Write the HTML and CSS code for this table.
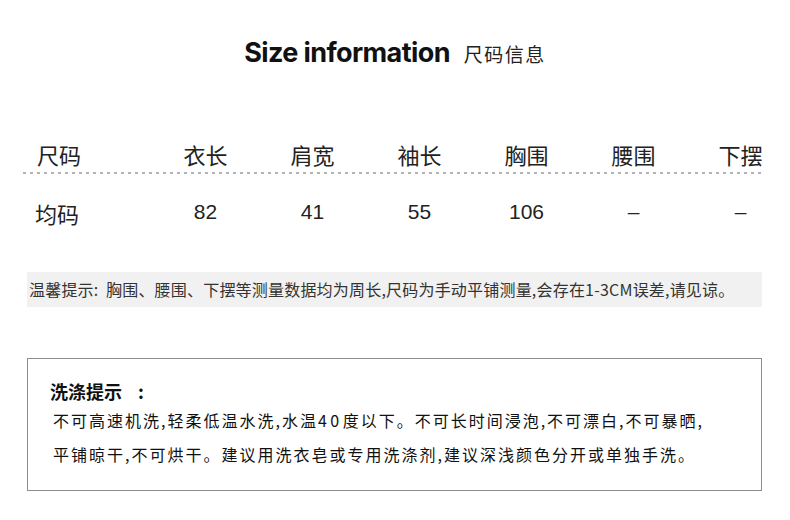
FILE: index.html
```html
<!DOCTYPE html>
<html lang="zh-CN">
<head>
<meta charset="utf-8">
<title>Size information</title>
<link rel="stylesheet" href="styles.css">
</head>
<body>
<div class="page">
  <div class="title">
    <span class="title-en">Size information</span>
    <span class="title-zh">尺码信息</span>
  </div>

  <div class="size-table">
    <div class="row head">
      <div class="cell first">尺码</div>
      <div class="cell">衣长</div>
      <div class="cell">肩宽</div>
      <div class="cell">袖长</div>
      <div class="cell">胸围</div>
      <div class="cell">腰围</div>
      <div class="cell">下摆</div>
    </div>
    <div class="dash-line"></div>
    <div class="row data">
      <div class="cell first">均码</div>
      <div class="cell num">82</div>
      <div class="cell num">41</div>
      <div class="cell num">55</div>
      <div class="cell num">106</div>
      <div class="cell num">–</div>
      <div class="cell num">–</div>
    </div>
  </div>

  <div class="notice">温馨提示:&nbsp; 胸围、腰围、下摆等测量数据均为周长,尺码为手动平铺测量,会存在1-3CM误差,请见谅。</div>

  <div class="care">
    <div class="care-title">洗涤提示<span class="colon">:</span></div>
    <div class="care-line">不可高速机洗,轻柔低温水洗,水温<span class="digits">40</span>度以下。不可长时间浸泡,不可漂白,不可暴晒,</div>
    <div class="care-line">平铺晾干,不可烘干。建议用洗衣皂或专用洗涤剂,建议深浅颜色分开或单独手洗。</div>
  </div>
</div>
</body>
</html>
```

FILE: styles.css
```css
html, body {
  margin: 0;
  padding: 0;
  background: #ffffff;
}

body {
  font-family: "Noto Sans CJK SC", "Noto Sans", sans-serif;
  color: #1e1e1e;
}

.page {
  width: 790px;
  height: 520px;
  overflow: hidden;
}

.title {
  padding-top: 39px;
  height: 27px;
  display: flex;
  justify-content: center;
  align-items: baseline;
  gap: 14px;
  line-height: 27px;
}

.title-en {
  font-family: Inter, "Liberation Sans", sans-serif;
  font-weight: 700;
  font-size: 27px;
  letter-spacing: -0.6px;
  color: #111;
}

.title-zh {
  font-size: 19px;
  color: #222;
  letter-spacing: 1.5px;
}

.size-table {
  margin-top: 73px;
  margin-left: 23px;
}

.row {
  display: grid;
  grid-template-columns: 129px repeat(6, 107px);
  align-items: center;
  height: 30px;
}

.head {
  font-size: 22px;
  line-height: 30px;
  color: #222;
}

.cell {
  text-align: center;
  white-space: nowrap;
}

.cell.first {
  text-align: left;
}

.head .first {
  padding-left: 14px;
}

.data {
  margin-top: 24px;
  font-size: 22px;
  line-height: 30px;
  color: #222;
}

.data .first {
  padding-left: 12px;
}

.num {
  align-self: start;
  font-family: "Liberation Sans", Arial, sans-serif;
  font-size: 21px;
  line-height: 28px;
}

.dash-line {
  margin-top: 3px;
  width: 740px;
  height: 2px;
  background: repeating-linear-gradient(90deg, #b4b4b4 0 3px, transparent 3px 7px);
}

.notice {
  margin: 44px 0 0 27px;
  width: 733px;
  height: 35px;
  padding-left: 2px;
  background: #f1f1f1;
  font-size: 16px;
  line-height: 35px;
  letter-spacing: 0.2px;
  color: #333;
  white-space: nowrap;
}

.care {
  margin: 51px 0 0 27px;
  width: 733px;
  border: 1px solid #8c8c8c;
  padding: 20px 0 19px 0;
  color: #111;
}

.care-title {
  padding-left: 22px;
  font-size: 18px;
  font-weight: 700;
  line-height: 24px;
}

.colon {
  margin-left: 16px;
}

.care-line {
  padding-left: 25px;
  font-size: 16px;
  line-height: 34px;
  letter-spacing: 2px;
  white-space: nowrap;
}

.digits {
  letter-spacing: 3.5px;
}
```
